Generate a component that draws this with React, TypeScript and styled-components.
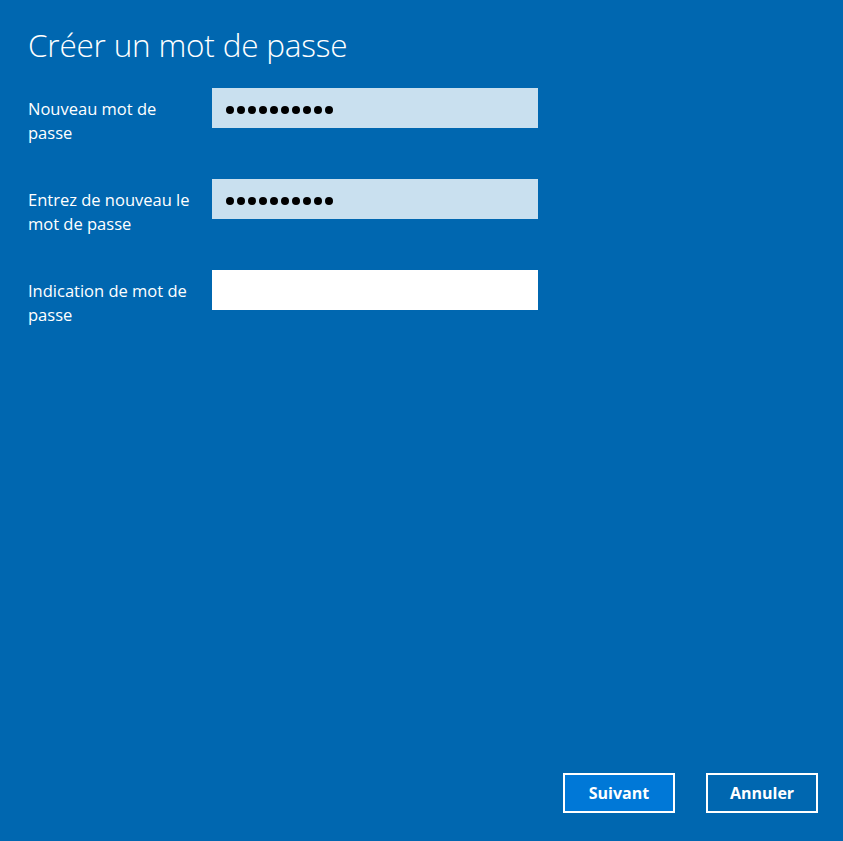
import React from "react";
import styled, { createGlobalStyle } from "styled-components";

const GlobalStyle = createGlobalStyle`
  html, body {
    margin: 0;
    padding: 0;
    height: 100%;
    background: #0067b0;
  }
  #root {
    height: 100%;
  }
`;

const Page = styled.div`
  box-sizing: border-box;
  height: 100vh;
  display: flex;
  flex-direction: column;
  padding: 24px 25px 28px 28px;
  background: #0067b0;
  color: #ffffff;
  font-family: "Open Sans", "Noto Sans", sans-serif;
`;

const Title = styled.h1`
  margin: 0 0 22px;
  font-size: 31.5px;
  font-weight: 300;
  line-height: 42px;
  letter-spacing: -0.2px;
`;

const Form = styled.div`
  display: grid;
  grid-template-columns: 184px 326px;
  grid-auto-rows: 40px;
  row-gap: 51px;
  align-items: start;
`;

const Label = styled.label`
  font-size: 16.5px;
  line-height: 24px;
  padding-top: 9px;
  width: 172px;
`;

const Field = styled.div<{ $filled?: boolean }>`
  height: 40px;
  display: flex;
  align-items: center;
  gap: 3px;
  padding: 3px 0 0 14px;
  box-sizing: border-box;
  background: ${(p) => (p.$filled ? "#c9e0ef" : "#ffffff")};
`;

const Dot = styled.span`
  width: 8px;
  height: 8px;
  border-radius: 50%;
  background: #000000;
`;

const Spacer = styled.div`
  flex: 1;
`;

const Actions = styled.div`
  display: flex;
  justify-content: flex-end;
  gap: 31px;
`;

const Button = styled.button<{ $primary?: boolean }>`
  width: 112px;
  height: 40px;
  box-sizing: border-box;
  border: 2px solid #ffffff;
  background: ${(p) => (p.$primary ? "#0078d7" : "transparent")};
  color: #ffffff;
  font-family: "Open Sans", "Noto Sans", sans-serif;
  font-size: 16px;
  font-weight: 700;
  padding: 0;
`;

const Dots = ({ count }: { count: number }) => (
  <>
    {Array.from({ length: count }).map((_, i) => (
      <Dot key={i} />
    ))}
  </>
);

export default function App() {
  return (
    <Page>
      <GlobalStyle />
      <Title>Créer un mot de passe</Title>
      <Form>
        <Label>Nouveau mot de passe</Label>
        <Field $filled>
          <Dots count={10} />
        </Field>
        <Label>Entrez de nouveau le mot de passe</Label>
        <Field $filled>
          <Dots count={10} />
        </Field>
        <Label>Indication de mot de passe</Label>
        <Field />
      </Form>
      <Spacer />
      <Actions>
        <Button $primary>Suivant</Button>
        <Button>Annuler</Button>
      </Actions>
    </Page>
  );
}
